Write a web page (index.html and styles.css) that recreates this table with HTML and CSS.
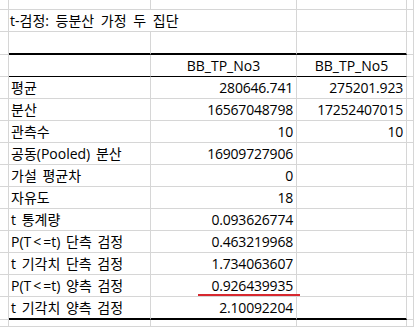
FILE: index.html
```html
<!DOCTYPE html>
<html lang="ko">
<head>
<meta charset="utf-8">
<title>t-검정: 등분산 가정 두 집단</title>
<link rel="stylesheet" href="styles.css">
</head>
<body>
<div class="sheet">
  <div class="c"></div><div class="c"></div><div class="c"></div><div class="c"></div><div class="c"></div>

  <div class="c"></div><div class="c title">t-검정: 등분산 가정 두 집단</div><div class="c"></div><div class="c"></div>

  <div class="c"></div><div class="c thick"></div><div class="c thick"></div><div class="c thick"></div><div class="c"></div>

  <div class="c"></div><div class="c head"></div><div class="c head ctr">BB_TP_No3</div><div class="c head ctr">BB_TP_No5</div><div class="c"></div>

  <div class="c"></div><div class="c lbl">평균</div><div class="c num">280646.741</div><div class="c num">275201.923</div><div class="c"></div>
  <div class="c"></div><div class="c lbl">분산</div><div class="c num">16567048798</div><div class="c num">17252407015</div><div class="c"></div>
  <div class="c"></div><div class="c lbl">관측수</div><div class="c num">10</div><div class="c num">10</div><div class="c"></div>
  <div class="c"></div><div class="c lbl">공동(Pooled) 분산</div><div class="c num">16909727906</div><div class="c"></div><div class="c"></div>
  <div class="c"></div><div class="c lbl">가설 평균차</div><div class="c num">0</div><div class="c"></div><div class="c"></div>
  <div class="c"></div><div class="c lbl">자유도</div><div class="c num">18</div><div class="c"></div><div class="c"></div>
  <div class="c"></div><div class="c lbl">t 통계량</div><div class="c num">0.093626774</div><div class="c"></div><div class="c"></div>
  <div class="c"></div><div class="c lbl">P(T<span class="op">&lt;</span>=t) 단측 검정</div><div class="c num">0.463219968</div><div class="c"></div><div class="c"></div>
  <div class="c"></div><div class="c lbl">t 기각치 단측 검정</div><div class="c num">1.734063607</div><div class="c"></div><div class="c"></div>
  <div class="c"></div><div class="c lbl">P(T<span class="op">&lt;</span>=t) 양측 검정</div><div class="c num marked">0.926439935<span class="underline"></span></div><div class="c"></div><div class="c"></div>
  <div class="c"></div><div class="c lbl thick">t 기각치 양측 검정</div><div class="c num thick">2.10092204</div><div class="c thick"></div><div class="c"></div>

  <div class="c"></div><div class="c"></div><div class="c"></div><div class="c"></div><div class="c"></div>
</div>
</body>
</html>
```

FILE: styles.css
```css
html, body {
  margin: 0;
  padding: 0;
  background: #ffffff;
  overflow: hidden;
}

.sheet {
  display: grid;
  grid-template-columns: 9px 142px 146px 110px 7px;
  grid-template-rows: 10px 22px 23px 22px repeat(10, 22px) 23px 7px;
  font-family: "Open Sans", "Noto Sans CJK KR", sans-serif;
  font-size: 14px;
  color: #000000;
}

.c {
  box-sizing: border-box;
  border-right: 1px solid #d6d6d6;
  border-bottom: 1px solid #d6d6d6;
  display: flex;
  align-items: center;
  white-space: nowrap;
  line-height: 1;
  min-width: 0;
}

.title {
  grid-column: span 2;
  padding-left: 1px;
  word-spacing: 3px;
}

.thick {
  border-bottom: 2px solid #000000;
}

.head {
  border-bottom: 1px solid #000000;
}

.ctr {
  justify-content: center;
}

.lbl {
  padding-left: 2px;
  word-spacing: 2px;
}

.op {
  padding: 0 2px;
}

.num {
  justify-content: flex-end;
  padding-right: 3px;
  letter-spacing: -0.2px;
}

.marked {
  position: relative;
  overflow: visible;
}

.underline {
  position: absolute;
  left: 47px;
  top: 19px;
  width: 102px;
  height: 2px;
  background: #d7282f;
  z-index: 2;
}
```
